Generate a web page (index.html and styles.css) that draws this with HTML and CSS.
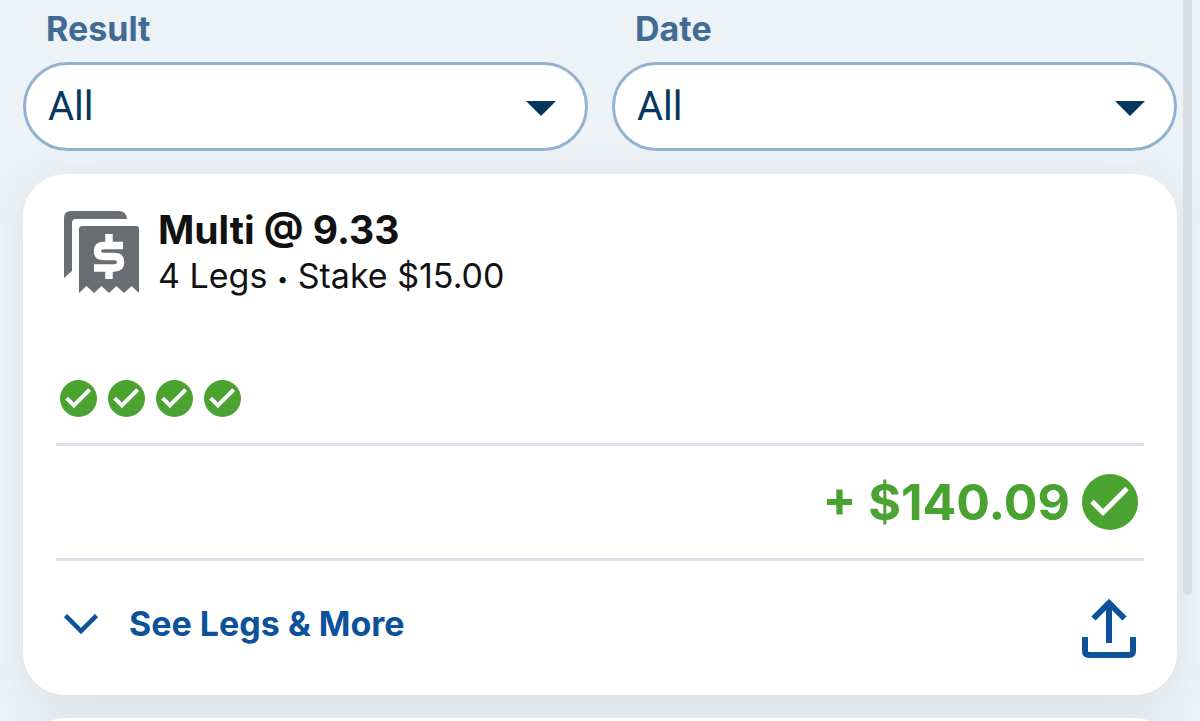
FILE: index.html
```html
<!DOCTYPE html>
<html lang="en">
<head>
<meta charset="utf-8">
<title>My Bets</title>
<link rel="stylesheet" href="styles.css">
</head>
<body>
<svg class="defs" aria-hidden="true">
  <symbol id="won" viewBox="0 0 56 56">
    <circle cx="28" cy="28" r="28" fill="#4aa231" stroke="none"/>
    <path d="M10 27.500l11 11L45 14.500" fill="none" stroke="#fff"/>
  </symbol>
</svg>
<main class="page">
  <form class="filters">
    <div class="filter">
      <label class="filter-label" for="result">Result</label>
      <div class="select-wrap">
        <select class="select" id="result"><option>All</option></select>
        <svg class="caret" viewBox="0 0 30 16" aria-hidden="true"><path d="M0 0h30L15 15z" fill="#06375f"/></svg>
      </div>
    </div>
    <div class="filter">
      <label class="filter-label" for="date">Date</label>
      <div class="select-wrap">
        <select class="select" id="date"><option>All</option></select>
        <svg class="caret" viewBox="0 0 30 16" aria-hidden="true"><path d="M0 0h30L15 15z" fill="#06375f"/></svg>
      </div>
    </div>
  </form>
  <article class="card">
    <header class="bet-head">
      <svg class="ticket" viewBox="0 0 76 83" aria-hidden="true">
        <path d="M0 67V7q0-7 7-7h48q7 0 8 8H12q-4 0-4 4v48z" fill="#6a6d72"/>
        <path d="M15 82V18q0-3 3-3h54q3 0 3 3v64l-7.500-7-7.500 7-7.500-7-7.500 7-7.500-7-7.500 7-7.500-7z" fill="#6a6d72"/>
        <path d="M59 34.500H40q-6.500 0-6.500 5.500t6.500 5.500h10q6.500 0 6.500 5.700t-6.500 5.700H30M45 23v10M45 57v11" fill="none" stroke="#fff" stroke-width="7.500"/>
      </svg>
      <div class="bet-text">
        <h2 class="bet-title">Multi @ 9.33</h2>
        <p class="bet-info">4 Legs <span class="dot">•</span> Stake $15.00</p>
      </div>
    </header>
    <div class="legs">
      <svg class="leg" role="img" aria-label="Won"><use href="#won"/></svg>
      <svg class="leg" role="img" aria-label="Won"><use href="#won"/></svg>
      <svg class="leg" role="img" aria-label="Won"><use href="#won"/></svg>
      <svg class="leg" role="img" aria-label="Won"><use href="#won"/></svg>
    </div>
    <div class="payout">
      <span>+ $140.09</span>
      <svg class="payout-icon" role="img" aria-label="Won"><use href="#won"/></svg>
    </div>
    <footer class="actions">
      <button class="more" type="button">
        <svg class="chevron" viewBox="0 0 34 20" aria-hidden="true"><path d="M1.500 1.500L17 17 32.500 1.500" fill="none" stroke="#0b529b" stroke-width="4.500"/></svg>
        See Legs &amp; More
      </button>
      <button class="share" type="button" aria-label="Share">
        <svg class="share-icon" viewBox="0 0 54 60" aria-hidden="true"><path d="M3 38v14q0 4 4 4h40q4 0 4-4V38M27 44V4M11.500 19.500L27 4l15.500 15.500" fill="none" stroke="#0b529b" stroke-width="6"/></svg>
      </button>
    </footer>
  </article>
  <article class="card"></article>
</main>
<div class="scrollbar"></div>
</body>
</html>
```
FILE: styles.css
```css
* { box-sizing: border-box; }
body {
  margin: 0;
  height: 100vh;
  overflow: hidden;
  background: #edf2f7;
  font-family: Inter, "Liberation Sans", sans-serif;
  color: #111;
}
.defs { display: block; width: 0; height: 0; }
.page {
  display: flex;
  flex-direction: column;
  gap: 23px;
  height: 100vh;
  padding: 9px 23px 0;
  overflow: hidden;
}
.filters {
  display: grid;
  grid-template-columns: 1fr 1fr;
  gap: 24px;
}
.filter { display: flex; flex-direction: column; gap: 13px; }
.filter-label {
  padding-left: 23px;
  font-size: 34px;
  line-height: 40px;
  font-weight: 700;
  color: #426b93;
}
.select-wrap { position: relative; }
.select {
  display: block;
  width: 100%;
  height: 89px;
  padding: 0 80px 0 22px;
  appearance: none;
  border: 3px solid #94b1d0;
  border-radius: 45px;
  background: #fff;
  font-family: Roboto, sans-serif;
  font-size: 40px;
  color: #06375f;
}
.caret {
  position: absolute;
  top: 39px;
  right: 32px;
  width: 30px;
  height: 16px;
  pointer-events: none;
}
.card {
  flex-shrink: 0;
  min-height: 100px;
  padding: 34px 33px;
  border-radius: 42px;
  background: #fff;
  box-shadow: 0 8px 40px rgba(60, 80, 105, 0.11);
}
.bet-head {
  display: flex;
  gap: 18px;
  padding: 3px 8px 0;
}
.ticket { width: 76px; height: 83px; }
.bet-title, .bet-info { margin: 0; }
.bet-title { font-size: 39px; line-height: 38px; font-weight: 700; }
.bet-info { font-size: 34px; line-height: 54px; }
.dot { font-size: 20px; line-height: 20px; vertical-align: 2px; }
.legs {
  display: flex;
  gap: 11px;
  padding: 77px 4px 26px;
}
.leg { width: 37px; height: 37px; stroke-width: 6px; }
.payout {
  display: flex;
  align-items: center;
  justify-content: flex-end;
  gap: 12px;
  height: 118px;
  padding: 0 6px;
  border-top: 3px solid #dfe0ec;
  border-bottom: 3px solid #dfe0ec;
  font-size: 50px;
  font-weight: 700;
  color: #4aa231;
}
.payout-icon { width: 56px; height: 56px; stroke-width: 5px; }
.actions {
  display: flex;
  align-items: flex-start;
  justify-content: space-between;
  padding: 38px 8px 2px;
}
.more, .share {
  padding: 0;
  border: 0;
  background: none;
  color: #0b529b;
}
.more {
  display: flex;
  align-items: center;
  gap: 31px;
  font-family: inherit;
  font-size: 34px;
  line-height: 50px;
  font-weight: 700;
}
.chevron { width: 34px; height: 20px; }
.share-icon { display: block; width: 54px; height: 60px; }
.scrollbar {
  position: absolute;
  top: 0;
  right: 8px;
  width: 9px;
  height: 595px;
  border-radius: 0 0 5px 5px;
  background: #d8dde2;
}
```
